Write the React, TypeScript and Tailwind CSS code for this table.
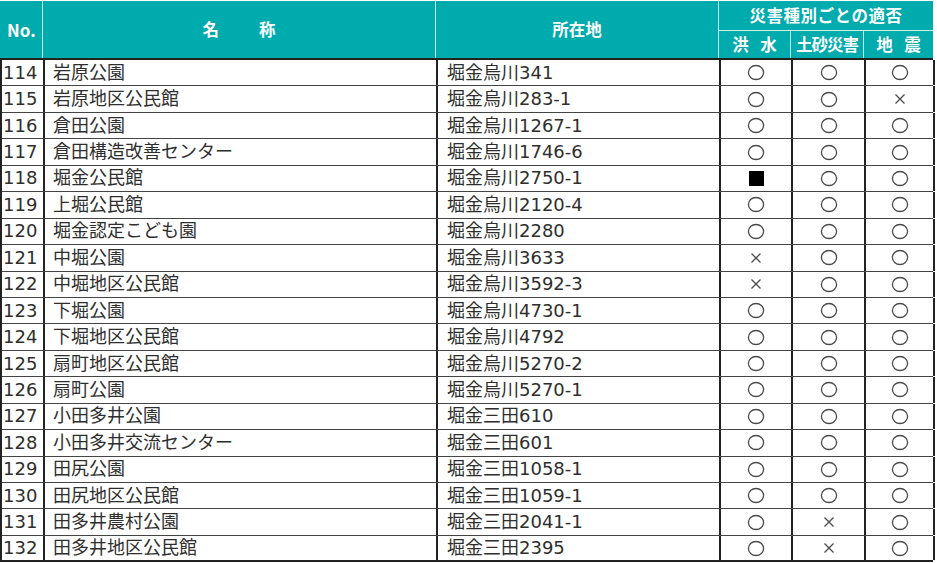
import React from "react";

type Mark = "o" | "x" | "s";
const rows: [string, string, string, Mark, Mark, Mark][] = [
  ["114", "岩原公園", "堀金烏川341", "o", "o", "o"],
  ["115", "岩原地区公民館", "堀金烏川283-1", "o", "o", "x"],
  ["116", "倉田公園", "堀金烏川1267-1", "o", "o", "o"],
  ["117", "倉田構造改善センター", "堀金烏川1746-6", "o", "o", "o"],
  ["118", "堀金公民館", "堀金烏川2750-1", "s", "o", "o"],
  ["119", "上堀公民館", "堀金烏川2120-4", "o", "o", "o"],
  ["120", "堀金認定こども園", "堀金烏川2280", "o", "o", "o"],
  ["121", "中堀公園", "堀金烏川3633", "x", "o", "o"],
  ["122", "中堀地区公民館", "堀金烏川3592-3", "x", "o", "o"],
  ["123", "下堀公園", "堀金烏川4730-1", "o", "o", "o"],
  ["124", "下堀地区公民館", "堀金烏川4792", "o", "o", "o"],
  ["125", "扇町地区公民館", "堀金烏川5270-2", "o", "o", "o"],
  ["126", "扇町公園", "堀金烏川5270-1", "o", "o", "o"],
  ["127", "小田多井公園", "堀金三田610", "o", "o", "o"],
  ["128", "小田多井交流センター", "堀金三田601", "o", "o", "o"],
  ["129", "田尻公園", "堀金三田1058-1", "o", "o", "o"],
  ["130", "田尻地区公民館", "堀金三田1059-1", "o", "o", "o"],
  ["131", "田多井農村公園", "堀金三田2041-1", "o", "x", "o"],
  ["132", "田多井地区公民館", "堀金三田2395", "o", "x", "o"],
];

function Sym({ m }: { m: Mark }) {
  if (m === "o")
    return (
      <svg width="18" height="17" viewBox="0 0 18 17">
        <ellipse cx="9" cy="8.5" rx="7.6" ry="7" fill="none" stroke="#4a4a4a" strokeWidth="1.3" />
      </svg>
    );
  if (m === "x")
    return (
      <svg width="14" height="14" viewBox="0 0 14 14">
        <path d="M2.5 2.5 L11.5 11.5 M11.5 2.5 L2.5 11.5" stroke="#4a4a4a" strokeWidth="1.3" />
      </svg>
    );
  return <div className="w-[15px] h-[15px] bg-black" />;
}

const cols = "grid-cols-[43px_393px_283px_72px_73px_69px]";

export default function App() {
  return (
    <div
      className="w-[937px] h-[563px] bg-white overflow-hidden"
      style={{ fontFamily: '"Noto Sans CJK JP", "Noto Sans", sans-serif' }}
    >
      <div className="w-[933px] pt-[1px]">
        <div
          className={`grid ${cols} grid-rows-[30px_27px] bg-[#00abad] text-white font-bold text-[16.5px] border-b-2 border-[#222]`}
        >
          <div className="row-span-2 flex items-center pl-[7px] border-r border-[#c9eeee] text-[17px]">
            No.
          </div>
          <div className="row-span-2 flex items-center justify-center border-r border-[#c9eeee]">
            名<span className="inline-block w-[40px]" />称
          </div>
          <div className="row-span-2 flex items-center justify-center border-r border-[#c9eeee]">
            所在地
          </div>
          <div className="col-span-3 flex items-center justify-center border-b border-[#c9eeee] tracking-[0.5px]">
            災害種別ごとの適否
          </div>
          <div className="flex items-center justify-center border-r border-[#c9eeee] tracking-[4px] pl-[4px]">
            洪 水
          </div>
          <div className="flex items-center justify-center border-r border-[#c9eeee] tracking-[-1px]">
            土砂災害
          </div>
          <div className="flex items-center justify-center tracking-[4px] pl-[4px]">
            地 震
          </div>
        </div>
        <div
          className="border-l-2 border-[#222]"
          style={{ fontFamily: '"DejaVu Sans", "Noto Sans CJK JP", sans-serif' }}
        >
          {rows.map((r, i) => (
            <div
              key={r[0]}
              className={`grid ${cols} h-[26.45px] border-b ${i === rows.length - 1 ? "border-b-2 border-[#222]" : "border-[#444]"} text-[18px] text-[#2e2e2e] leading-none`}
            >
              <div className="flex items-center pl-[1px] border-r-2 border-[#222]">
                {r[0]}
              </div>
              <div className="flex items-center pl-[8px] border-r-2 border-[#222]">{r[1]}</div>
              <div className="flex items-center pl-[9px] border-r-2 border-[#222]">{r[2]}</div>
              <div className="flex items-center justify-center border-r-2 border-[#222]">
                <Sym m={r[3]} />
              </div>
              <div className="flex items-center justify-center border-r-2 border-[#222]">
                <Sym m={r[4]} />
              </div>
              <div className="flex items-center justify-center border-r-2 border-[#222]">
                <Sym m={r[5]} />
              </div>
            </div>
          ))}
        </div>
      </div>
    </div>
  );
}
